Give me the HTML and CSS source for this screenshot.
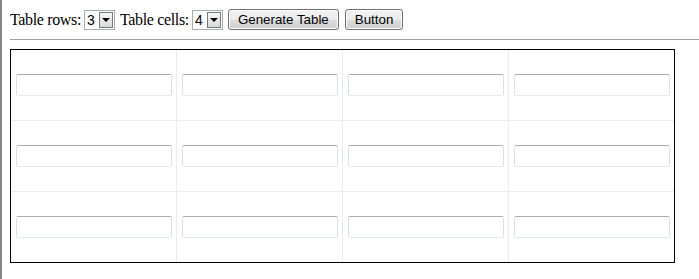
FILE: index.html
```html
<!DOCTYPE html>
<html lang="en">
  <head>
    <meta charset="UTF-8" />
    <title>Table generator</title>
    <link rel="stylesheet" href="styles.css">
  </head>
  <body>
    <div class="toolbar">
      <label for="rows">Table rows:</label>
      <span class="picker">
        <select id="rows">
          <option>1</option>
          <option>2</option>
          <option selected>3</option>
          <option>4</option>
        </select>
        <span class="picker-arrow"></span>
      </span>
      <label for="cells">Table cells:</label>
      <span class="picker">
        <select id="cells">
          <option>1</option>
          <option>2</option>
          <option>3</option>
          <option selected>4</option>
        </select>
        <span class="picker-arrow"></span>
      </span>
      <button type="button" class="btn">Generate Table</button>
      <button type="button" class="btn">Button</button>
    </div>
    <hr class="divider" />
    <table class="grid">
      <tr>
        <td><input type="text" /></td>
        <td><input type="text" /></td>
        <td><input type="text" /></td>
        <td><input type="text" /></td>
      </tr>
      <tr>
        <td><input type="text" /></td>
        <td><input type="text" /></td>
        <td><input type="text" /></td>
        <td><input type="text" /></td>
      </tr>
      <tr>
        <td><input type="text" /></td>
        <td><input type="text" /></td>
        <td><input type="text" /></td>
        <td><input type="text" /></td>
      </tr>
    </table>
  </body>
</html>
```

FILE: styles.css
```css
/* Page frame */
html {
  border-left: 2px solid #858585;
  min-height: 100%;
  background: #ffffff;
}

body {
  margin: 8px 0 0 8px;
  font-family: "Liberation Serif", "Times New Roman", serif;
  font-size: 16px;
  color: #000;
}

/* Top controls */
.toolbar {
  display: flex;
  align-items: center;
  height: 23px;
}

.toolbar label {
  margin-right: 3px;
  letter-spacing: -0.35px;
}

.picker {
  display: inline-flex;
  align-items: stretch;
  width: 31px;
  height: 20px;
  box-sizing: border-box;
  border: 1px solid #a5acb2;
  background: #fff;
  margin-right: 5px;
}

.picker select {
  appearance: none;
  -webkit-appearance: none;
  border: none;
  outline: none;
  background: transparent;
  font-family: "Liberation Sans", Arial, sans-serif;
  font-size: 14px;
  padding: 0 0 0 2px;
  width: 13px;
  color: #000;
}

.picker-arrow {
  flex: 1;
  margin: 1px;
  border: 1px solid #7a7a7a;
  background: linear-gradient(#f6f6f6, #dadada);
  position: relative;
}

.picker-arrow::after {
  content: "";
  position: absolute;
  left: 50%;
  top: 50%;
  margin: -2px 0 0 -4px;
  border-left: 4px solid transparent;
  border-right: 4px solid transparent;
  border-top: 4px solid #000;
}

.btn {
  height: 21px;
  padding: 0 9px;
  margin: 0 6px 0 0;
  border: 1px solid #707070;
  border-radius: 3px;
  background: linear-gradient(#f2f2f2 0%, #ebebeb 50%, #dddddd 51%, #cfcfcf 100%);
  font-family: "Liberation Sans", Arial, sans-serif;
  font-size: 13.33px;
  color: #000;
  box-shadow: inset 0 0 0 1px #fcfcfc;
}

.divider {
  height: 0;
  border: 0;
  border-top: 1px solid #a0a0a0;
  margin: 8px 0 9px 0;
}

/* Generated table */
.grid {
  border: 1px solid #000;
  border-collapse: separate;
  border-spacing: 0;
}

.grid td {
  height: 70px;
  padding: 0 4px 0 5px;
  vertical-align: middle;
}

.grid td + td {
  border-left: 1px solid #ececec;
}

.grid tr + tr td {
  border-top: 1px solid #ececec;
}

.grid input {
  display: block;
  width: 156px;
  height: 22px;
  box-sizing: border-box;
  border: 1px solid #dbdfe6;
  border-top-color: #abadb3;
  border-bottom-color: #e3e9ef;
  border-radius: 2px;
  padding: 0 3px;
}
```
